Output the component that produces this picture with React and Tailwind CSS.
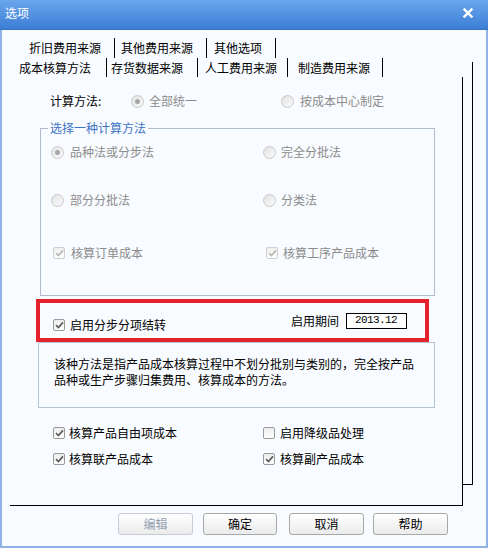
import React from "react";

function Radio({ checked }) {
  return (
    <span className="w-[13px] h-[13px] rounded-full border border-[#c9c9c9] bg-linear-to-br from-[#e2e2e2] to-[#fcfcfc] flex items-center justify-center shrink-0">
      {checked && <span className="w-[5px] h-[5px] rounded-full bg-[#a6a6a6]" />}
    </span>
  );
}

function Check({ checked, disabled }) {
  return (
    <span
      className={
        disabled
          ? "w-[12px] h-[12px] rounded-[2px] border border-[#d0d0d0] bg-linear-to-b from-[#f0f0f0] to-white flex items-center justify-center shrink-0"
          : "w-[12px] h-[12px] rounded-[2px] border border-[#9a9a9a] bg-linear-to-b from-[#ececec] to-white flex items-center justify-center shrink-0"
      }
    >
      {checked && (
        <svg width="9" height="8" viewBox="0 0 9 8">
          <path
            d="M1 4.2 L3.4 6.5 L8 1.4"
            fill="none"
            stroke={disabled ? "#b8b8b8" : "#5c5c5c"}
            strokeWidth="1.7"
          />
        </svg>
      )}
    </span>
  );
}

function Btn({ children, disabled, className }) {
  return (
    <div
      className={
        (disabled
          ? "border-[#c8cdd4] text-[#93a0b2] "
          : "border-[#a8a8a8] text-black ") +
        "h-[22px] rounded-[3px] border bg-linear-to-b from-white to-[#ebebeb] flex items-center justify-center text-[12px] " +
        className
      }
    >
      {children}
    </div>
  );
}

export default function App() {
  return (
    <div className="w-[488px] h-[548px] bg-[#f8fbff] font-['Noto_Sans_CJK_SC',sans-serif] text-[12px] leading-none select-none overflow-hidden">
      {/* title bar */}
      <div className="h-[30px] bg-linear-to-b from-[#6aa6ec] to-[#3b7ed6] flex items-center justify-between border-b border-[#3a74c4]">
        <span className="pl-[5px] text-white text-[12px] mb-[3px]">选项</span>
        <svg width="10" height="10" viewBox="0 0 10 10" className="mr-[15px] mb-[3px]">
          <path d="M1.5 1.5 L8.5 8.5 M8.5 1.5 L1.5 8.5" stroke="white" strokeWidth="2.4" strokeLinecap="square" />
        </svg>
      </div>

      {/* body */}
      <div className="relative h-[518px] shadow-[inset_2px_0_0_#8db2e3,inset_-2px_0_0_#8db2e3,inset_0_-2px_0_#8db2e3]">
        {/* back page */}
        <div className="absolute left-[20px] top-[32px] w-[453px] h-[423px] border-r border-b border-black" />

        {/* tabs */}
        <div className="pt-[8px]">
          <div className="flex h-[20px] ml-[22px]">
            <div className="w-[93px] pl-[7px] border-r border-black flex items-center">折旧费用来源</div>
            <div className="w-[92px] pl-[6px] border-r border-black flex items-center">其他费用来源</div>
            <div className="w-[69px] pl-[7px] border-r border-black flex items-center">其他选项</div>
          </div>
          <div className="flex h-[19px] ml-[12px]">
            <div className="w-[95px] pl-[7px] border-r border-black flex items-center">成本核算方法</div>
            <div className="w-[91px] pl-[4px] border-r border-black flex items-center">存货数据来源</div>
            <div className="w-[90px] pl-[7px] border-r border-black flex items-center">人工费用来源</div>
            <div className="w-[95px] pl-[10px] border-r border-black flex items-center">制造费用来源</div>
          </div>
        </div>

        {/* front page */}
        <div className="relative ml-[10px] w-[453px] h-[429px] border-r border-b border-black bg-[#f8fbff]">
          <div className="pt-[14px] h-[34px] flex items-center">
            <span className="ml-[40px] w-[81px] text-black">计算方法:</span>
            <div className="w-[150px] flex items-center">
              <Radio checked />
              <span className="ml-[5px] text-[#8c8c8c]">全部统一</span>
            </div>
            <div className="flex items-center">
              <Radio />
              <span className="ml-[6px] text-[#8c8c8c]">按成本中心制定</span>
            </div>
          </div>

          {/* group box */}
          <div className="relative mt-[17px] ml-[30px] w-[395px] h-[168px] border border-[#aebccb]">
            <span className="absolute left-[7px] top-[-9px] px-[2px] bg-[#f8fbff] text-[#3d74c6] leading-[16px]">
              选择一种计算方法
            </span>
            <div className="pt-[13px] pl-[10px] text-[#8c8c8c]">
              <div className="flex items-center h-[20px]">
                <div className="w-[212px] flex items-center">
                  <Radio checked />
                  <span className="ml-[6px]">品种法或分步法</span>
                </div>
                <div className="flex items-center">
                  <Radio />
                  <span className="ml-[5px]">完全分批法</span>
                </div>
              </div>
              <div className="flex items-center h-[20px] mt-[28px]">
                <div className="w-[212px] flex items-center">
                  <Radio />
                  <span className="ml-[6px]">部分分批法</span>
                </div>
                <div className="flex items-center">
                  <Radio />
                  <span className="ml-[5px]">分类法</span>
                </div>
              </div>
              <div className="flex items-center h-[20px] mt-[33px]">
                <div className="w-[212px] flex items-center pl-[2px]">
                  <Check checked disabled />
                  <span className="ml-[6px]">核算订单成本</span>
                </div>
                <div className="flex items-center pl-[3px]">
                  <Check checked disabled />
                  <span className="ml-[5px]">核算工序产品成本</span>
                </div>
              </div>
            </div>
          </div>

          {/* red box */}
          <div className="mt-[3px] ml-[26px] w-[393px] h-[43px] border-4 border-[#e3222b] flex items-center">
            <div className="flex items-center pl-[13px] mt-[9px]">
              <Check checked />
              <span className="ml-[5px] text-black">启用分步分项结转</span>
            </div>
            <div className="ml-auto mr-[18px] flex items-center">
              <span className="text-black">启用期间</span>
              <div className="ml-[7px] w-[61px] h-[16px] border border-black bg-white flex items-center pl-[8px] font-['Liberation_Mono',monospace] text-[11px] tracking-[-0.6px]">
                2013.12
              </div>
            </div>
          </div>

          {/* description */}
          <div className="ml-[28px] w-[397px] h-[66px] border border-[#b6c5d4] pt-[13px] pl-[15px] text-black leading-[16px]">
            <div>该种方法是指产品成本核算过程中不划分批别与类别的，完全按产品</div>
            <div>品种或生产步骤归集费用、核算成本的方法。</div>
          </div>

          {/* bottom checkboxes */}
          <div className="mt-[15px] h-[20px] flex items-center pl-[43px] text-black">
            <div className="w-[210px] flex items-center">
              <Check checked />
              <span className="ml-[4px]">核算产品自由项成本</span>
            </div>
            <div className="flex items-center">
              <Check />
              <span className="ml-[5px]">启用降级品处理</span>
            </div>
          </div>
          <div className="mt-[6px] h-[20px] flex items-center pl-[43px] text-black">
            <div className="w-[210px] flex items-center">
              <Check checked />
              <span className="ml-[4px]">核算联产品成本</span>
            </div>
            <div className="flex items-center">
              <Check checked />
              <span className="ml-[5px]">核算副产品成本</span>
            </div>
          </div>
        </div>

        {/* buttons */}
        <div className="mt-[7px] flex pl-[118px]">
          <Btn disabled className="w-[75px]">编辑</Btn>
          <Btn className="w-[74px] ml-[10px]">确定</Btn>
          <Btn className="w-[75px] ml-[12px]">取消</Btn>
          <Btn className="w-[75px] ml-[9px]">帮助</Btn>
        </div>
      </div>
    </div>
  );
}
